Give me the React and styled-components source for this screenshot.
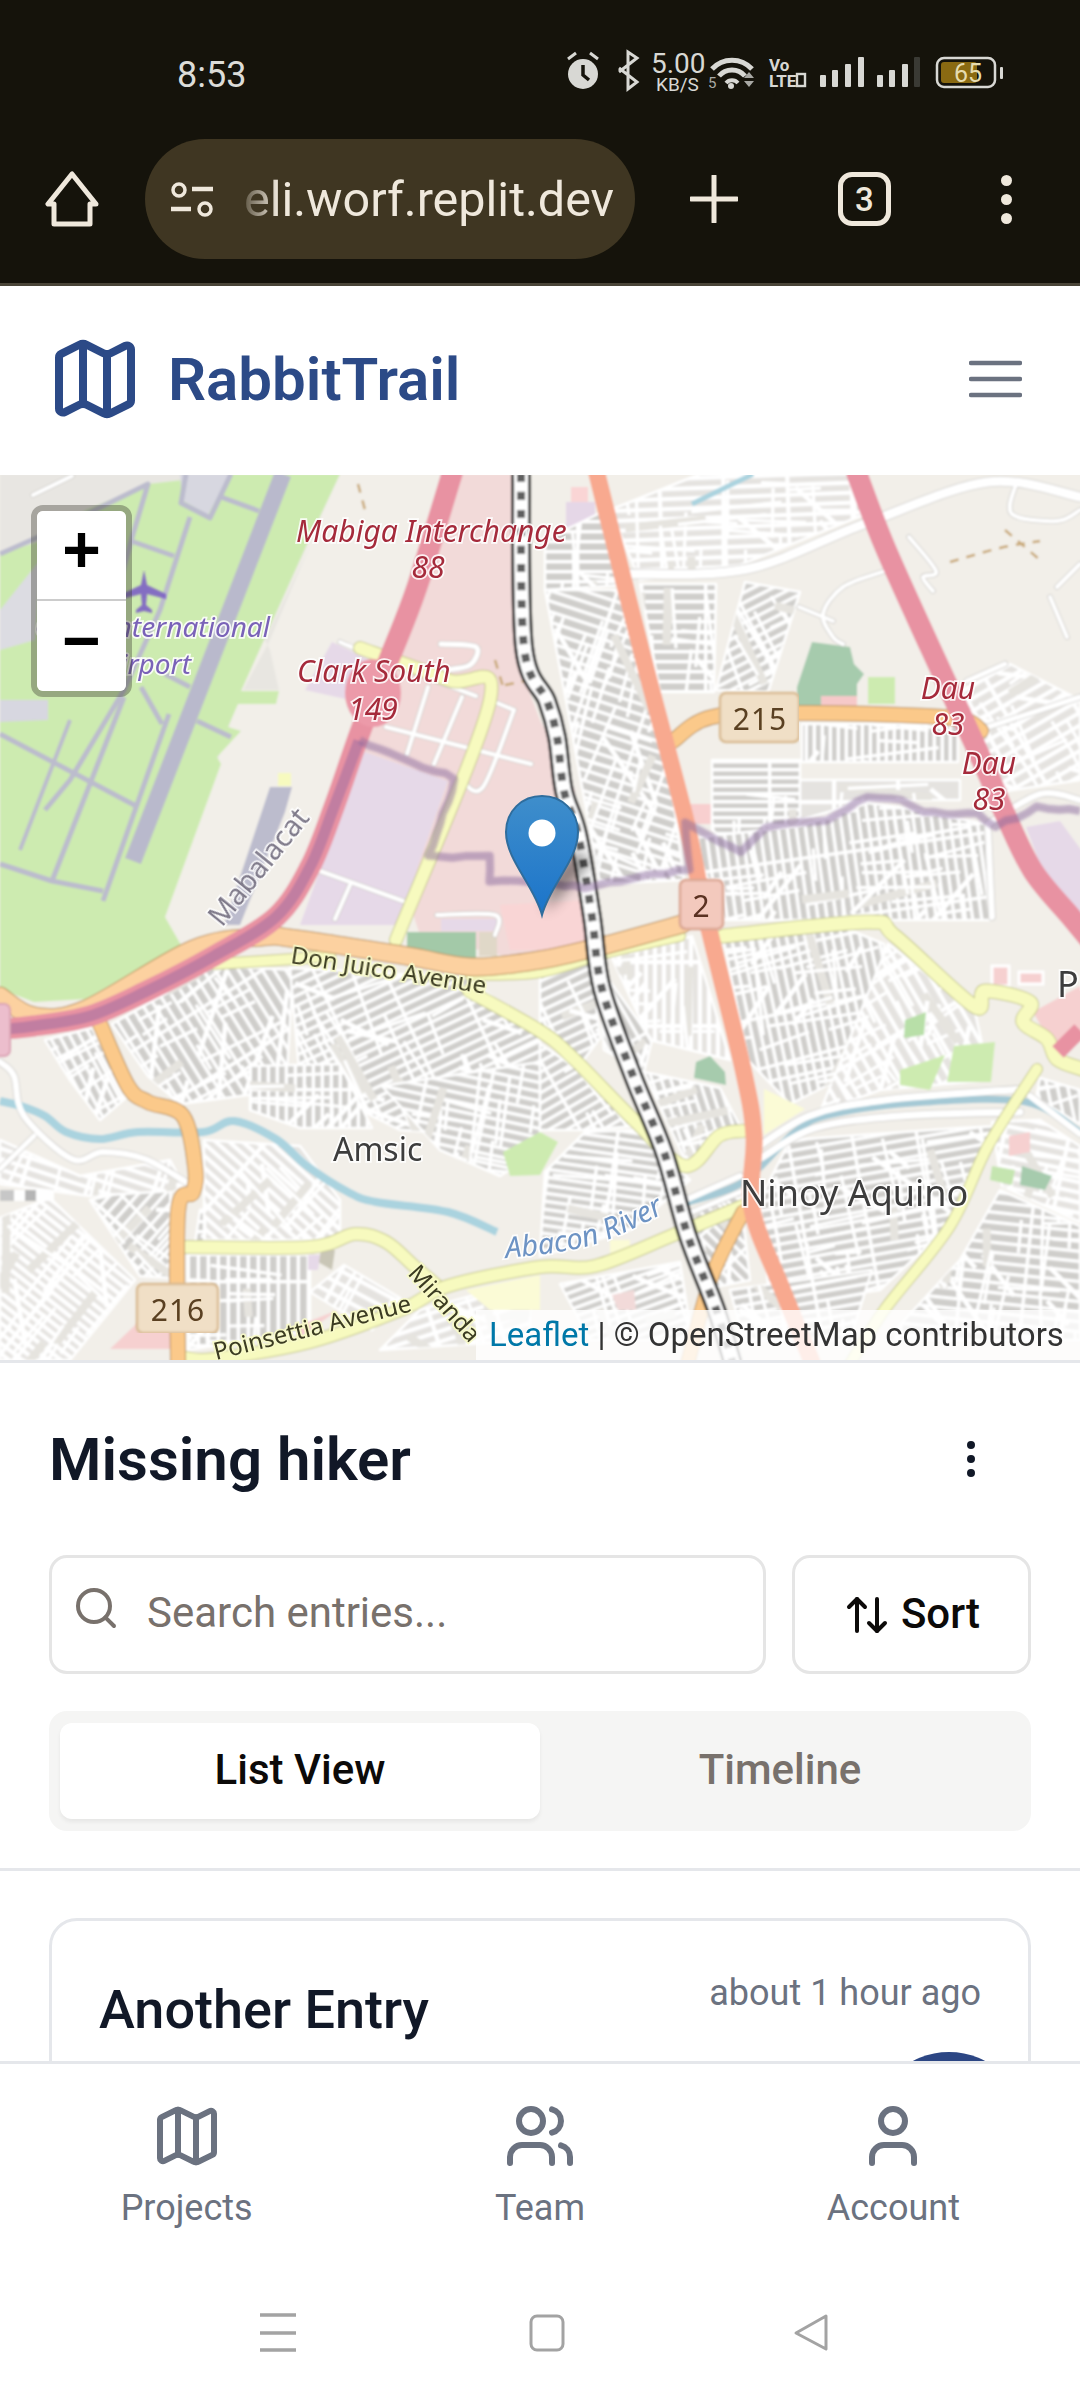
import React from "react";
import styled, { createGlobalStyle } from "styled-components";
import { Map as MapIcon, Users, User, Search, ArrowUpDown, EllipsisVertical } from "lucide-react";

const Global = createGlobalStyle`
  html, body { margin: 0; padding: 0; background: #fff; }
  * { box-sizing: border-box; }
  body { font-family: Roboto, "Noto Sans", "Liberation Sans", sans-serif; }
`;

const Screen = styled.div`
  width: 1080px; height: 2400px; display: flex; flex-direction: column; overflow: hidden; background: #fff;
`;
const Chrome = styled.div`
  background: #15130b; height: 286px; border-bottom: 3px solid #4a4538; flex: none;
`;
const StatusBar = styled.div`
  height: 126px; padding: 23px 0 0 177px; display: flex; align-items: center; color: #dcdcd8;
`;
const Time = styled.span`
  font-size: 36px; width: 383px; letter-spacing: 0; flex: none;
`;
const StatusIcons = styled.svg`
  width: 460px; height: 60px; flex: none; display: block;
`;
const StatusText = styled.text`
  font-family: Roboto, sans-serif; fill: ${p => p.$fill || "#d8d8d4"}; font-size: ${p => p.$size}px; font-weight: ${p => p.$w || 400};
`;
const UrlRow = styled.div`
  height: 146px; display: flex; align-items: center; padding-left: 45px; color: #efe8dc;
`;
const HomeIcon = styled.svg`
  width: 54px; height: 56px; flex: none; display: block;
`;
const Pill = styled.div`
  margin-left: 46px; width: 490px; height: 120px; border-radius: 60px; background: #3f3622; display: flex; align-items: center; padding-left: 25px; flex: none;
`;
const TuneIcon = styled.svg`
  width: 46px; height: 36px; flex: none; display: block;
`;
const Url = styled.span`
  margin-left: 28px; font-size: 48.5px; white-space: nowrap; letter-spacing: 0;
  -webkit-mask-image: linear-gradient(to right, rgba(0,0,0,.2) 0, #000 34px);
  mask-image: linear-gradient(to right, rgba(0,0,0,.2) 0, #000 34px);
`;
const PlusIcon = styled.svg`
  margin-left: 55px; width: 48px; height: 48px; flex: none; display: block;
`;
const TabCount = styled.div`
  margin-left: 100px; width: 53px; height: 54px; border: 5px solid #efe8dc; border-radius: 14px; display: flex; align-items: center; justify-content: center; font-size: 33px; font-weight: 500; flex: none;
`;
const MoreDots = styled.div`
  margin-left: 110px; display: flex; flex-direction: column; gap: 8px;
  span { width: 11px; height: 11px; border-radius: 50%; background: #efe8dc; display: block; }
`;
const AppHeader = styled.header`
  height: 189px; flex: none; display: flex; align-items: center; padding: 0 58px 3px 47px; background: #fff; color: #2c4a87;
`;
const Brand = styled.div`
  display: flex; align-items: center; gap: 25px; flex: 1; font-size: 60px; font-weight: 600; letter-spacing: 0;
`;
const Burger = styled.svg`
  width: 53px; height: 38px; display: block;
`;
const MapBox = styled.div`
  position: relative; height: 885px; flex: none; overflow: hidden; background: #f2efe9;
`;
const MapSvg = styled.svg`
  display: block; width: 1080px; height: 885px;
`;
const Lbl = styled.text`
  font-family: "Noto Sans", "DejaVu Sans", sans-serif;
  font-size: ${p => p.$size || 27}px;
  font-style: ${p => p.$italic ? "italic" : "normal"};
  fill: ${p => p.$fill || "#3c3c3c"};
  stroke: ${p => p.$halo || "rgba(255,255,255,.85)"};
  stroke-width: 3.5px;
  paint-order: stroke;
`;
const ZoomControl = styled.div`
  position: absolute; left: 31px; top: 30px; width: 101px; border: 6px solid rgba(60,60,50,.38); border-radius: 12px; background-clip: padding-box; display: flex; flex-direction: column;
`;
const ZoomBtn = styled.div`
  height: ${p => p.$h}px; background: #fff; color: #000; display: flex; align-items: center; justify-content: center;
  border-radius: ${p => p.$first ? "6px 6px 0 0" : "0 0 6px 6px"};
  border-bottom: ${p => p.$first ? "2px solid #ccc" : "0"};
  font: 700 66px/1 "Liberation Mono", monospace;
`;
const Attribution = styled.div`
  position: absolute; right: 0; bottom: 0; height: 50px; width: 604px; background: rgba(255,255,255,.8); color: #333; font-size: 33px; line-height: 50px; padding-left: 13px; white-space: nowrap;
  a { color: #0078a8; text-decoration: none; }
`;
const Pin = styled.svg`
  position: absolute; left: 470px; top: 318px; width: 150px; height: 128px; overflow: visible;
`;
const Content = styled.main`
  flex: 1; min-height: 0; overflow: hidden; position: relative; border-top: 3px solid #e5e7eb; background: #fff;
`;
const Toolbar = styled.section`
  padding: 0 49px; height: 505px;
`;
const TitleRow = styled.div`
  height: 192px; display: flex; align-items: center; justify-content: space-between; padding-right: 36px;
`;
const Title = styled.h1`
  margin: 0; font-size: 60px; font-weight: 600; color: #111827; letter-spacing: 0;
`;
const SearchRow = styled.div`
  display: flex; gap: 26px; height: 119px;
`;
const SearchBox = styled.div`
  width: 717px; border: 3px solid #e5e5e5; border-radius: 18px; display: flex; align-items: flex-start; padding: 26px 0 0 20px; gap: 27px; color: #78716c; font-size: 42px;
  span { line-height: 48px; margin-top: 5px; }
`;
const SortBtn = styled.button`
  flex: 1; background: #fff; border: 3px solid #e5e5e5; border-radius: 18px; display: flex; align-items: center; justify-content: center; gap: 10px; font: 500 42px Roboto, sans-serif; color: #0c0a09; padding: 0;
  span { margin-top: -2px; }
`;
const Tabs = styled.div`
  margin-top: 37px; height: 120px; background: #f5f5f4; border-radius: 18px; padding: 12px 11px; display: flex;
`;
const Tab = styled.div`
  width: 480px; border-radius: 12px; display: flex; align-items: center; justify-content: center; font-size: 42px; font-weight: 500; padding-bottom: 3px;
  color: ${p => p.$active ? "#0c0a09" : "#78716c"};
  background: ${p => p.$active ? "#fff" : "transparent"};
  box-shadow: ${p => p.$active ? "0 3px 4px rgba(0,0,0,.06)" : "none"};
`;
const Divider = styled.hr`
  margin: 0; border: 0; height: 3px; background: #e5e7eb;
`;
const List = styled.div`
  padding: 47px 49px 0;
`;
const Card = styled.article`
  border: 3px solid #e5e7eb; border-radius: 28px; padding: 51px 47px; height: 300px; display: flex; justify-content: space-between; align-items: flex-start;
`;
const CardTitle = styled.h2`
  margin: 6px 0 0; font-size: 54px; font-weight: 500; color: #111827;
`;
const CardTime = styled.span`
  font-size: 36px; color: #6b7280;
`;
const Fab = styled.div`
  position: absolute; left: 872px; top: 689px; width: 154px; height: 154px; border-radius: 50%; background: #2c4684;
`;
const BottomNav = styled.nav`
  flex: none; height: 339px; background: #fff; border-top: 3px solid #e5e7eb; position: relative; z-index: 1;
`;
const NavItems = styled.div`
  display: grid; grid-template-columns: repeat(3, 1fr); padding: 36px 10px 0;
`;
const NavItem = styled.div`
  display: flex; flex-direction: column; align-items: center; color: #6b7280; font-size: 36px; gap: 15px;
`;
const Gestures = styled.div`
  margin-top: 84px; display: flex; align-items: center; padding-left: 258px;
`;
const GestureIcon = styled.svg`
  width: 40px; height: 40px; display: block; flex: none; margin-right: ${p => p.$mr || 0}px;
`;

function smooth(p) {
  if (p.length < 3) return "M" + p.map(q => q.join(" ")).join("L");
  let d = `M${p[0][0]} ${p[0][1]}`;
  for (let i = 0; i < p.length - 1; i++) {
    const a = p[i - 1] || p[i], b = p[i], c = p[i + 1], e = p[i + 2] || c;
    const c1 = [b[0] + (c[0] - a[0]) / 6, b[1] + (c[1] - a[1]) / 6];
    const c2 = [c[0] - (e[0] - b[0]) / 6, c[1] - (e[1] - b[1]) / 6];
    d += `C${c1[0].toFixed(1)} ${c1[1].toFixed(1)} ${c2[0].toFixed(1)} ${c2[1].toFixed(1)} ${c[0]} ${c[1]}`;
  }
  return d;
}
const poly = p => p.map(q => q.join(",")).join(" ");

const Road = ({ pts, w, color, casing, dash }) => (
  <g fill="none" strokeLinecap="round" strokeLinejoin="round">
    {casing && <path d={smooth(pts)} stroke={casing} strokeWidth={w + 2} strokeDasharray={dash} />}
    <path d={smooth(pts)} stroke={color} strokeWidth={w} />
  </g>
);

const patches = [
  { a: -2, g: 10, p: [[610, 510], [700, 474], [850, 474], [870, 512], [740, 565], [640, 580]], light: true },
  { a: 0, g: 10, p: [[545, 540], [606, 510], [622, 585], [545, 590]] },
  { a: 0, g: 10, p: [[640, 584], [716, 584], [714, 692], [660, 692]] },
  { a: -27, g: 9, p: [[745, 582], [800, 592], [768, 692], [716, 690]] },
  { a: 18, g: 10, p: [[545, 590], [628, 590], [668, 760], [684, 880], [600, 884], [566, 700]] },
  { a: 0, g: 8, p: [[712, 760], [800, 760], [800, 822], [740, 850], [712, 830]] },
  { a: 90, g: 8, p: [[802, 724], [958, 724], [958, 762], [802, 762]] },
  { a: 0, g: 32, p: [[800, 780], [960, 780], [960, 800], [870, 800], [800, 820]], light: true },
  { a: 82, g: 9, p: [[692, 838], [800, 826], [868, 803], [905, 808], [985, 824], [990, 920], [724, 920]] },
  { a: -30, g: 11, p: [[962, 690], [1010, 664], [1080, 700], [1080, 780], [1000, 792]], light: true },
  { a: 62, g: 9, p: [[45, 1040], [92, 1028], [128, 1096], [100, 1120], [70, 1080]] },
  { a: 58, g: 10, p: [[112, 1024], [215, 966], [293, 970], [286, 1090], [180, 1104], [148, 1076]] },
  { a: -25, g: 9, p: [[290, 968], [468, 978], [540, 1034], [540, 1130], [470, 1134], [400, 1130], [340, 1100], [300, 1080]] },
  { a: 90, g: 9, p: [[250, 1066], [340, 1064], [372, 1128], [300, 1128], [250, 1110]] },
  { a: 12, g: 9, p: [[382, 1086], [540, 1062], [540, 1150], [500, 1176], [440, 1150]] },
  { a: 38, g: 8, p: [[0, 1218], [50, 1198], [135, 1280], [70, 1360], [0, 1360]], light: true },
  { a: -48, g: 10, p: [[90, 1200], [170, 1182], [172, 1278], [140, 1276]] },
  { a: 0, g: 10, p: [[200, 1210], [258, 1198], [262, 1244], [195, 1244]] },
  { a: 90, g: 10, p: [[188, 1255], [310, 1255], [310, 1330], [188, 1350]] },
  { a: 28, g: 12, p: [[344, 1265], [400, 1298], [372, 1330], [310, 1292]], light: true },
  { a: 42, g: 9, p: [[204, 1140], [300, 1146], [340, 1200], [340, 1240], [204, 1240]], light: true },
  { a: 18, g: 10, p: [[0, 1140], [80, 1176], [170, 1160], [186, 1190], [90, 1196], [0, 1184]], light: true },
  { a: -25, g: 9, p: [[540, 974], [590, 952], [600, 1038], [582, 1062], [540, 1034]] },
  { a: 90, g: 9, p: [[612, 958], [692, 936], [712, 1000], [730, 1060], [650, 1040]], light: true },
  { a: 60, g: 9, p: [[598, 965], [652, 1040], [644, 1072], [604, 1050]] },
  { a: 78, g: 9, p: [[724, 942], [840, 926], [884, 944], [878, 1060], [790, 1104], [748, 1060]] },
  { a: 72, g: 9, p: [[644, 1072], [720, 1088], [742, 1130], [686, 1162]] },
  { a: -30, g: 9, p: [[540, 1044], [582, 1072], [636, 1126], [585, 1130], [540, 1130]] },
  { a: 60, g: 11, p: [[888, 944], [975, 1012], [990, 1080], [880, 1090], [820, 1112]], light: true },
  { a: -10, g: 9, p: [[790, 1140], [960, 1128], [1000, 1126], [985, 1150], [960, 1216], [880, 1290], [770, 1306], [760, 1200]] },
  { a: 8, g: 8, p: [[585, 1132], [640, 1130], [690, 1180], [630, 1230], [540, 1256], [545, 1172]] },
  { a: 6, g: 10, p: [[1000, 1190], [1080, 1226], [1080, 1340], [886, 1340], [960, 1260]] },
  { a: 12, g: 10, p: [[992, 1122], [1040, 1120], [1080, 1146], [1080, 1222], [1002, 1186]], light: true },
  { a: 78, g: 10, p: [[1040, 1078], [1080, 1090], [1080, 1124], [1036, 1098]] },
  { a: -10, g: 9, p: [[730, 1290], [872, 1270], [850, 1340], [744, 1340]] },
  { a: -20, g: 8, p: [[560, 1284], [680, 1262], [692, 1340], [590, 1340]] },
  { a: -18, g: 10, p: [[420, 1310], [530, 1280], [530, 1340], [380, 1350]], light: true },
  { a: 45, g: 9, p: [[692, 1212], [740, 1190], [750, 1280], [700, 1290]] },
];

let seed = 4711;
const rnd = () => (seed = (seed * 16807) % 2147483647) / 2147483647;
const patchNoise = patches.map((s) => {
  const xs = s.p.map(q => q[0]), ys = s.p.map(q => q[1]);
  const x0 = Math.min(...xs), x1 = Math.max(...xs), y0 = Math.min(...ys), y1 = Math.max(...ys);
  const n = Math.round(((x1 - x0) * (y1 - y0)) / 620);
  const out = [];
  for (let i = 0; i < n; i++) {
    const x = x0 + rnd() * (x1 - x0), y = y0 + rnd() * (y1 - y0);
    const kind = rnd();
    const len = 26 + rnd() * 70;
    const ang = ((s.a + (kind < 0.62 ? 90 : kind < 0.85 ? 0 : 45) + (rnd() - 0.5) * 16) * Math.PI) / 180;
    out.push({
      d: `M${x.toFixed(1)} ${y.toFixed(1)}L${(x + Math.cos(ang) * len).toFixed(1)} ${(y + Math.sin(ang) * len).toFixed(1)}`,
      w: kind < 0.85 ? 3.2 : 4.5,
      beige: rnd() < 0.1,
    });
  }
  return out;
});

const wobble = pts => {
  const out = [];
  for (let i = 0; i < pts.length - 1; i++) {
    const [x0, y0] = pts[i], [x1, y1] = pts[i + 1];
    const steps = Math.max(1, Math.round(Math.hypot(x1 - x0, y1 - y0) / 12));
    for (let k = 0; k < steps; k++) {
      const t = k / steps;
      out.push([+(x0 + (x1 - x0) * t + (rnd() - .5) * 3).toFixed(1), +(y0 + (y1 - y0) * t + (rnd() - .5) * 3).toFixed(1)]);
    }
  }
  out.push(pts[pts.length - 1]);
  return out;
};

const whites = [
  { w: 9, p: [[626, 574], [747, 569], [864, 524], [988, 482], [1080, 497]] },
  { w: 4, p: [[885, 571], [843, 587], [823, 614], [833, 637], [843, 644]] },
  { w: 4, p: [[799, 607], [833, 621]] },
  { w: 4, p: [[909, 537], [936, 571], [923, 577], [933, 591]] },
  { w: 4, p: [[1016, 484], [1012, 514], [1057, 521], [1080, 510]] },
  { w: 4, p: [[1057, 587], [1080, 564]] },
  { w: 4, p: [[1050, 597], [1067, 637]] },
  { w: 5, p: [[1005, 664], [967, 681]] },
  { w: 5, p: [[1080, 697], [988, 727]] },
  { w: 6, p: [[988, 824], [1040, 794], [1080, 800]] },
  { w: 6, p: [[988, 827], [992, 917]] },
  { w: 6, p: [[0, 1062], [14, 1076], [24, 1116], [72, 1159], [103, 1152], [145, 1159], [186, 1182]] },
  { w: 5, p: [[0, 1169], [34, 1136]] },
  { w: 7, p: [[751, 1152], [809, 1116], [885, 1100], [1023, 1089]] },
  { w: 7, p: [[761, 1158], [815, 1128], [900, 1116], [1020, 1112]] },
  { w: 6, p: [[1030, 1096], [1080, 1134]] },
  { w: 6, p: [[688, 1199], [740, 1176]] },
  { w: 5, p: [[692, 1212], [745, 1190]] },
  { w: 4, p: [[340, 642], [392, 664], [476, 696]] },
  { w: 4, p: [[428, 687], [407, 754]] },
  { w: 4, p: [[386, 727], [531, 764]] },
  { w: 4, p: [[462, 697], [434, 764]] },
  { w: 4, p: [[514, 710], [483, 787], [462, 781]] },
  { w: 4, p: [[514, 710], [490, 700]] },
  { w: 5, p: [[441, 644], [476, 647], [470, 665], [445, 670]] },
  { w: 4, p: [[320, 871], [403, 901]] },
  { w: 4, p: [[350, 885], [335, 919]] },
  { w: 4, p: [[437, 915], [495, 915], [495, 935]] },
  { w: 4, p: [[33, 495], [72, 476]] },
];

const taxi = [
  { w: 5, p: [[0, 554], [52, 531], [148, 484], [131, 541], [110, 620]] },
  { w: 5, p: [[190, 517], [160, 610], [124, 690], [70, 780], [45, 810]] },
  { w: 5, p: [[169, 714], [103, 901]] },
  { w: 5, p: [[124, 697], [52, 881]] },
  { w: 5, p: [[0, 734], [138, 807]] },
  { w: 5, p: [[0, 864], [52, 881], [103, 891]] },
  { w: 5, p: [[141, 687], [162, 724]] },
  { w: 5, p: [[131, 541], [174, 556]] },
  { w: 5, p: [[221, 497], [259, 511]] },
  { w: 5, p: [[197, 721], [231, 737]] },
  { w: 5, p: [[165, 674], [190, 687]] },
  { w: 5, p: [[186, 474], [181, 503], [210, 518], [231, 474]] },
  { w: 4, p: [[70, 720], [20, 850]] },
];

const tan = [
  [[358, 484], [365, 510]],
  [[950, 562], [1000, 548], [1040, 541]],
  [[1005, 530], [1040, 560]],
  [[495, 660], [504, 690]],
  [[505, 685], [530, 680]],
];

const motorwayA = [[452, 474], [417, 587], [390, 657], [362, 727], [334, 807], [310, 867], [276, 917], [214, 956], [145, 992], [90, 1016], [34, 1026], [0, 1029]];
const motorwayB = [[857, 474], [885, 547], [930, 647], [964, 721], [988, 774], [1005, 814], [1033, 871], [1071, 917], [1090, 940]];
const salmon = [[597, 474], [643, 657], [685, 817], [699, 884], [709, 929], [743, 1069], [754, 1136], [752, 1209], [781, 1286], [812, 1362]];
const rail = [[521, 474], [524, 647], [547, 701], [557, 737], [564, 791], [578, 834], [592, 917], [602, 989], [633, 1076], [664, 1152], [688, 1236], [716, 1309], [733, 1364]];
const trail = wobble([[359, 741], [455, 779], [428, 857], [490, 857], [490, 881], [531, 883], [585, 887], [688, 869], [685, 821], [740, 852], [767, 827], [826, 821], [868, 796], [902, 799], [923, 812], [978, 814], [995, 827], [1037, 807], [1080, 811]]);

function MapDrawing() {
  return (
    <MapSvg viewBox="0 475 1080 885" xmlns="http://www.w3.org/2000/svg">
      <defs>
        <filter id="tile" x="0" y="0" width="100%" height="100%">
          <feGaussianBlur stdDeviation="1" />
        </filter>
        <filter id="soft" x="-5%" y="-5%" width="110%" height="110%">
          <feGaussianBlur stdDeviation="0.5" />
        </filter>
        <filter id="trailBlur" x="-5%" y="-5%" width="110%" height="110%">
          <feGaussianBlur stdDeviation="1.4" />
        </filter>
        <path id="abaconCurve" d="M506 1258C550 1254 585 1250 612 1238C640 1226 660 1216 690 1198" fill="none" />
        {patches.map((s, i) => (
          <pattern key={i} id={"res" + i} patternUnits="userSpaceOnUse" width="64" height={s.g} patternTransform={`rotate(${s.a})`}>
            <rect width="64" height={s.g} fill={s.light ? "#e5e3e0" : "#cfcecb"} />
            <rect width="64" height={s.light ? 4.2 : 3.4} fill="#fff" />
            <rect width={s.light ? 4.2 : 3.4} height={s.g} fill="#fff" />
          </pattern>
        ))}
        {patches.map((s, i) => (
          <clipPath key={i} id={"clip" + i}><polygon points={poly(s.p)} /></clipPath>
        ))}
      </defs>
      <g filter="url(#tile)">
        <rect x="0" y="475" width="1080" height="885" fill="#f2efe9" />
        <polygon fill="#e8e6e2" points={poly([[0, 474], [340, 474], [241, 691], [165, 917], [0, 989]])} />
        <polygon fill="#cdebb0" points={poly([[340, 474], [307, 544], [241, 691], [279, 691], [276, 704], [238, 704], [228, 727], [241, 731], [217, 757], [221, 764], [165, 917], [181, 945], [86, 999], [34, 1002], [0, 989], [0, 554], [50, 538], [86, 510], [148, 484], [235, 474]])} />
        <polygon fill="#e8e6e1" points={poly([[310, 545], [270, 640], [243, 690], [279, 690], [270, 650], [265, 640]])} />
        <polygon fill="#dcdce2" points={poly([[0, 610], [40, 560], [35, 640], [0, 650]])} />
        <polygon fill="#d7d7e0" points={poly([[0, 700], [48, 700], [48, 720], [0, 722]])} />
        <polygon fill="#d7d7e0" points={poly([[180, 474], [230, 474], [208, 515], [182, 500]])} />

        <polygon fill="#f2dad9" points={poly([[462, 474], [515, 474], [515, 655], [540, 720], [575, 790], [585, 940], [520, 960], [420, 935], [352, 735]])} />
        <polygon fill="#e6d9e8" points={poly([[362, 751], [448, 781], [420, 860], [400, 925], [300, 925], [320, 870]])} />
        <polygon fill="#e6d9e8" points={poly([[332, 642], [370, 660], [350, 700], [305, 690]])} />
        <polygon fill="#e6d9e8" points={poly([[441, 919], [500, 919], [500, 931], [441, 931]])} />
        <polygon fill="#f9d5d5" points={poly([[500, 905], [590, 900], [590, 950], [510, 950]])} />
        <polygon fill="#a3c9a8" points={poly([[407, 932], [476, 932], [476, 960], [407, 955]])} />
        <polygon fill="#e0d8c8" points={poly([[479, 932], [497, 932], [497, 956], [479, 956]])} />
        <polygon fill="#e6d9e8" points={poly([[1026, 827], [1060, 821], [1082, 851], [1082, 917], [1060, 917]])} />

        <polygon fill="#a6cbad" points={poly([[812, 642], [850, 647], [854, 664], [864, 674], [857, 684], [857, 707], [797, 707], [797, 687]])} />
        <rect x="868" y="677" width="27" height="27" fill="#cdebb0" />
        <rect x="821" y="696" width="36" height="14" fill="#f6c9c9" />
        <rect x="571" y="487" width="17" height="17" fill="#fad5d5" />
        <rect x="566" y="502" width="29" height="29" fill="#e5d7e7" />
        <rect x="688" y="804" width="23" height="20" fill="#f8cfcf" />

        {patches.map((s, i) => (
          <g key={i}>
            <polygon points={poly(s.p)} fill={`url(#res${i})`} stroke="#fff" strokeWidth="2.5" strokeLinejoin="round" />
            <g clipPath={`url(#clip${i})`}>
              {patchNoise[i].map((n, k) => (
                <path key={k} d={n.d} stroke={n.beige ? "#e6e4df" : "#fff"} strokeWidth={n.beige ? 8 : n.w} fill="none" />
              ))}
            </g>
          </g>
        ))}

        <polygon fill="#cdebb0" points={poly([[954, 1046], [995, 1042], [991, 1082], [947, 1082]])} />
        <polygon fill="#b8dfa8" points={poly([[905, 1020], [926, 1012], [924, 1035], [904, 1038]])} />
        <polygon fill="#cdebb0" points={poly([[900, 1070], [945, 1055], [930, 1090], [900, 1085]])} />
        <polygon fill="#a6cbad" points={poly([[696, 1062], [710, 1056], [725, 1072], [726, 1085], [694, 1078]])} />
        <polygon fill="#fbfbd6" points={poly([[764, 1089], [805, 1109], [764, 1135]])} />
        <polygon fill="#cdebb0" points={poly([[503, 1152], [540, 1132], [558, 1142], [540, 1175], [510, 1176]])} />
        <polygon fill="#c5e5b0" points={poly([[992, 1166], [1015, 1170], [1012, 1185], [990, 1180]])} />
        <polygon fill="#a6cbad" points={poly([[1022, 1166], [1052, 1176], [1045, 1190], [1020, 1185]])} />
        <polygon fill="#f6d0d0" points={poly([[1009, 1136], [1030, 1132], [1030, 1152], [1009, 1156]])} />
        <polygon fill="#f6d0d0" points={poly([[110, 1349], [172, 1349], [172, 1290]])} />
        <polygon fill="#f6d0d0" points={poly([[300, 1325], [338, 1310], [296, 1340]])} />
        <polygon fill="#f6d0d0" points={poly([[1033, 1012], [1082, 985], [1082, 1040], [1055, 1050]])} />
        <rect x="992" y="966" width="17" height="20" fill="#f6d0d0" stroke="#fff" strokeWidth="3" />
        <rect x="1019" y="972" width="24" height="12" fill="#f6d0d0" stroke="#fff" strokeWidth="3" />
        <rect x="610" y="1240" width="20" height="20" fill="#fbfbd6" />
        <polygon fill="#f2dad9" points={poly([[612, 1295], [634, 1290], [636, 1310], [618, 1310]])} />
        <polygon fill="#c9c6b6" points={poly([[322, 1248], [335, 1250], [332, 1270], [318, 1262]])} />
        <polygon fill="#e6d9e8" points={poly([[308, 1255], [320, 1255], [318, 1270], [308, 1270]])} />
        <polygon fill="#fbfbd6" points={poly([[466, 1290], [540, 1275], [540, 1310], [490, 1310]])} />

        {whites.map((s, i) => (
          <path key={"c" + i} d={smooth(s.p)} fill="none" stroke="#cfcdca" strokeWidth={s.w + 1.6} strokeLinecap="round" />
        ))}
        <path d={smooth([[0, 1101], [21, 1106], [45, 1116], [66, 1132], [100, 1139], [138, 1132], [203, 1132], [234, 1121], [276, 1139], [307, 1166], [348, 1192], [376, 1202], [448, 1212], [497, 1232]])} fill="none" stroke="#aad3df" strokeWidth="8" />
        <path d={smooth([[1080, 1132], [1026, 1102], [926, 1102], [833, 1114], [795, 1132], [743, 1182], [688, 1202]])} fill="none" stroke="#a5c9d5" strokeWidth="7" />
        <path d={smooth([[692, 504], [753, 474]])} fill="none" stroke="#aad3df" strokeWidth="5" />
        {whites.map((s, i) => (
          <path key={"w" + i} d={smooth(s.p)} fill="none" stroke="#fff" strokeWidth={s.w} strokeLinecap="round" />
        ))}
        <polygon fill="#bcbccd" points={poly([[270, 787], [292, 787], [285, 812], [240, 925], [224, 925]])} />
        <rect x="278" y="773" width="13" height="13" fill="#f7fabf" />
        {taxi.map((s, i) => (
          <path key={"t" + i} d={"M" + s.p.map(q => q.join(" ")).join("L")} fill="none" stroke="#bcbccd" strokeWidth={s.w} strokeLinejoin="round" />
        ))}
        <path d="M283 474L133 861" stroke="#b9b9cc" strokeWidth="17" fill="none" />
        <g>
          <rect x="0" y="1190" width="14" height="11" fill="#c7c7c7" />
          <rect x="14" y="1190" width="11" height="11" fill="#fff" />
          <rect x="25" y="1190" width="11" height="11" fill="#b5b5b5" />
          <rect x="36" y="1190" width="18" height="11" fill="#fff" />
        </g>
        {tan.map((p, i) => (
          <path key={i} d={smooth(p)} fill="none" stroke="#c9a977" strokeWidth="2.5" strokeDasharray="9 8" />
        ))}

        <Road color="#f7fabf" casing="#c6c88d" w={12} pts={[[396, 940], [490, 700], [448, 680], [360, 648]]} />
        <Road color="#f7fabf" casing="#c6c88d" w={10} pts={[[214, 964], [293, 959], [330, 956]]} />
        <Road color="#f7fabf" casing="#c6c88d" w={10} pts={[[470, 975], [540, 972], [609, 952], [680, 936]]} />
        <Road color="#f7fabf" casing="#c6c88d" w={13} pts={[[723, 936], [867, 922], [895, 936], [974, 1006], [985, 991], [1030, 1002], [1023, 1022], [1047, 1039], [1057, 1059], [1082, 1069]]} />
        <Road color="#f7fabf" casing="#c6c88d" w={10} pts={[[1037, 1069], [988, 1146], [950, 1226], [885, 1309], [850, 1364]]} />
        <Road color="#f7fabf" casing="#c6c88d" w={12} pts={[[469, 991], [540, 1031], [574, 1059], [636, 1122], [685, 1166], [719, 1136], [743, 1131]]} />
        <Road color="#f7fabf" casing="#c6c88d" w={12} pts={[[186, 1247], [310, 1247], [355, 1234], [386, 1242], [414, 1266], [441, 1289]]} />
        <Road color="#f7fabf" casing="#c6c88d" w={12} pts={[[186, 1358], [214, 1359], [310, 1342], [403, 1309], [448, 1286], [540, 1267], [595, 1266], [671, 1236], [743, 1206]]} />

        <Road color="#fcd1a0" casing="#b9925c" w={17} pts={[[0, 996], [34, 1016], [86, 1009], [193, 949], [262, 937], [297, 939], [407, 956], [472, 967], [540, 960], [602, 946], [682, 924]]} />
        <Road color="#fbc98a" casing="#b9925c" w={14} pts={[[100, 1024], [128, 1086], [148, 1102], [183, 1116], [195, 1166], [193, 1192], [178, 1212], [178, 1362]]} />
        <Road color="#fbc98a" casing="#b9925c" w={13} pts={[[743, 1212], [712, 1276], [688, 1362]]} />
        <Road color="#fbc98a" casing="#b9925c" w={14} pts={[[673, 741], [712, 717], [800, 713], [926, 716], [967, 721], [981, 731]]} />

        <Road color="#f8a98f" w={17} pts={salmon} />
        <Road color="#e892a2" w={21} pts={motorwayA} />
        <Road color="#e892a2" w={21} pts={motorwayB} />
        <path d="M1080 1030L1058 1052" stroke="#e892a2" strokeWidth="16" />
        <ellipse cx="373" cy="693" rx="28" ry="34" fill="#ec9aa9" />
        <path d={smooth([[359, 741], [334, 807], [310, 867], [276, 917], [214, 956], [145, 992], [90, 1016], [34, 1026], [8, 1029]])} fill="none" stroke="#9a6a9f" strokeWidth="11" opacity=".5" />

        <path d={smooth(rail)} fill="none" stroke="#1f1f1f" strokeWidth="20" />
        <path d={smooth(rail)} fill="none" stroke="#fff" strokeWidth="14" />
        <path d={smooth(rail)} fill="none" stroke="#5e5e5e" strokeWidth="8" strokeDasharray="8 10" />
      </g>
      <path d={"M" + trail.map(q => q.join(" ")).join("L")} fill="none" stroke="#8a6a9e" strokeWidth="8" strokeLinejoin="round" opacity=".5" filter="url(#trailBlur)" />
      <g filter="url(#tile)">
        <rect x="720" y="693" width="79" height="49" rx="6" fill="#f0dfc6" stroke="#d9bc94" strokeWidth="2.5" />
        <rect x="680" y="880" width="43" height="49" rx="6" fill="#f3c9bd" stroke="#dba794" strokeWidth="2.5" />
        <rect x="137" y="1284" width="81" height="49" rx="6" fill="#f0dfc6" stroke="#d9bc94" strokeWidth="2.5" />
        <rect x="-30" y="1004" width="40" height="52" rx="6" fill="#ecbecd" stroke="#dca4b5" strokeWidth="2" />
        <path d="M144 570l3 15 19 9v5l-19-5-1 11 6 5v3l-8-2-8 2v-3l6-5-1-11-19 5v-5l19-9z" fill="#7b5fc4" opacity=".9" />
      </g>
      <g filter="url(#soft)">
        <Lbl x="296" y="542" $italic $size={30} $fill="#a52a3a">Mabiga Interchange</Lbl>
        <Lbl x="428" y="578" $italic $size={30} $fill="#a52a3a" textAnchor="middle">88</Lbl>
        <Lbl x="297" y="682" $italic $size={30} $fill="#a52a3a">Clark South</Lbl>
        <Lbl x="373" y="720" $italic $size={30} $fill="#a52a3a" textAnchor="middle">149</Lbl>
        <Lbl x="948" y="699" $italic $size={30} $fill="#a52a3a" textAnchor="middle">Dau</Lbl>
        <Lbl x="948" y="735" $italic $size={30} $fill="#a52a3a" textAnchor="middle">83</Lbl>
        <Lbl x="989" y="774" $italic $size={30} $fill="#a52a3a" textAnchor="middle">Dau</Lbl>
        <Lbl x="989" y="810" $italic $size={30} $fill="#a52a3a" textAnchor="middle">83</Lbl>
        <Lbl x="270" y="637" $italic $size={28} $fill="#7a62b8" textAnchor="end">Clark International</Lbl>
        <Lbl x="191" y="674" $italic $size={28} $fill="#7a62b8" textAnchor="end">Airport</Lbl>
        <Lbl $size={29} $fill="#7f7a8a" transform="translate(222 928) rotate(-51)">Mabalacat</Lbl>
        <Lbl $size={24} $fill="#3a3a20" $halo="rgba(247,250,200,.9)" transform="translate(290 963) rotate(9)">Don Juico Avenue</Lbl>
        <Lbl x="333" y="1161" $size={32}>Amsic</Lbl>
        <Lbl $italic $size={29} $fill="#6d93c4"><textPath href="#abaconCurve">Abacon River</textPath></Lbl>
        <Lbl $size={24} $fill="#3a3a20" $halo="rgba(247,250,200,.9)" transform="translate(407 1274) rotate(48)">Miranda</Lbl>
        <Lbl $size={24} $fill="#3a3a20" $halo="rgba(247,250,200,.9)" transform="translate(216 1360) rotate(-14)">Poinsettia Avenue</Lbl>
        <Lbl x="740" y="1206" $size={36}>Ninoy Aquino</Lbl>
        <Lbl x="1057" y="997" $size={36}>Pu</Lbl>
        <Lbl x="760" y="730" $size={30} $fill="#5a4020" $halo="none" textAnchor="middle" letterSpacing="1">215</Lbl>
        <Lbl x="701" y="917" $size={30} $fill="#5a3020" $halo="none" textAnchor="middle">2</Lbl>
        <Lbl x="178" y="1321" $size={30} $fill="#5a4020" $halo="none" textAnchor="middle" letterSpacing="1">216</Lbl>
      </g>
    </MapSvg>
  );
}

const App = () => (
  <Screen>
    <Global />
    <Chrome>
      <StatusBar>
        <Time>8:53</Time>
        <StatusIcons viewBox="560 45 460 60">
          <g fill="#d8d8d4">
            <circle cx="583" cy="74" r="15" />
            <path d="M583 65v10l6 5" stroke="#15130b" strokeWidth="3.5" fill="none" />
            <path d="M568 59l8-6M598 59l-8-6" stroke="#d8d8d4" strokeWidth="3" fill="none" />
            <path d="M619 72l18-14-9-6v37l9-7-18-14" stroke="#d8d8d4" strokeWidth="3" fill="none" />
            <StatusText x="651" y="73" $size={28}>5.00</StatusText>
            <StatusText x="656" y="91" $size={19}>KB/S</StatusText>
            <path d="M712 69a27 27 0 0 1 40 0" stroke="#d8d8d4" strokeWidth="5" fill="none" />
            <path d="M719 76a17 17 0 0 1 26 0" stroke="#d8d8d4" strokeWidth="5" fill="none" />
            <path d="M726 83a8 8 0 0 1 12 0" stroke="#d8d8d4" strokeWidth="4" fill="none" />
            <circle cx="731" cy="86" r="3" />
            <StatusText x="708" y="88" $size={15} $fill="#a8a8a4">5</StatusText>
            <path d="M744 78l5-6 5 6zM744 81h10l-5 6z" fill="#a8a8a4" />
            <StatusText x="769" y="71" $size={17} $w={700}>Vo</StatusText>
            <StatusText x="769" y="87" $size={17} $w={700}>LTE</StatusText>
            <rect x="797" y="74" width="8" height="12" fill="none" stroke="#d8d8d4" strokeWidth="2.4" />
            <rect x="820" y="75" width="6" height="12" rx="1" />
            <rect x="832" y="70" width="6" height="17" rx="1" />
            <rect x="845" y="64" width="6" height="23" rx="1" />
            <rect x="858" y="57" width="6" height="30" rx="1" />
            <rect x="877" y="75" width="6" height="12" rx="1" />
            <rect x="889" y="70" width="6" height="17" rx="1" />
            <rect x="902" y="64" width="6" height="23" rx="1" />
            <rect x="914" y="57" width="6" height="30" rx="1" fill="#3a3a34" />
            <rect x="937" y="58" width="58" height="29" rx="7" fill="none" stroke="#d8d8d4" strokeWidth="2.5" />
            <rect x="941" y="62" width="36" height="21" rx="3" fill="#8a6a12" />
            <rect x="1000" y="67" width="3" height="12" rx="1" />
            <StatusText x="954" y="82" $size={25} $fill="#e6dcb0">65</StatusText>
          </g>
        </StatusIcons>
      </StatusBar>
      <UrlRow>
        <HomeIcon viewBox="0 0 54 56">
          <path d="M27 3L3 33h6v20h36V33h6z" fill="none" stroke="#efe8dc" strokeWidth="5" strokeLinejoin="round" />
        </HomeIcon>
        <Pill>
          <TuneIcon viewBox="0 0 46 36">
            <circle cx="9" cy="9" r="6" fill="none" stroke="#efe8dc" strokeWidth="3.5" />
            <path d="M22 8h21M1 28h20" stroke="#efe8dc" strokeWidth="4.5" />
            <circle cx="35" cy="28" r="6" fill="none" stroke="#efe8dc" strokeWidth="3.5" />
          </TuneIcon>
          <Url>eli.worf.replit.dev</Url>
        </Pill>
        <PlusIcon viewBox="0 0 48 48">
          <path d="M24 1v46M1 24h46" stroke="#efe8dc" strokeWidth="5" strokeLinecap="round" />
        </PlusIcon>
        <TabCount>3</TabCount>
        <MoreDots><span /><span /><span /></MoreDots>
      </UrlRow>
    </Chrome>
    <AppHeader>
      <Brand>
        <MapIcon size={96} strokeWidth={2} />
        RabbitTrail
      </Brand>
      <Burger viewBox="0 0 53 38">
        <path d="M2 3h49M2 19h49M2 35h49" stroke="#6b7280" strokeWidth="4.6" strokeLinecap="round" />
      </Burger>
    </AppHeader>
    <MapBox>
      <MapDrawing />
      <ZoomControl>
        <ZoomBtn $first $h={90}>+</ZoomBtn>
        <ZoomBtn $h={90}>−</ZoomBtn>
      </ZoomControl>
      <Pin viewBox="470 793 150 128">
        <defs>
          <linearGradient id="pinFill" x1="0" y1="0" x2="0" y2="1">
            <stop offset="0" stopColor="#3f8ecb" />
            <stop offset="1" stopColor="#1b74ca" />
          </linearGradient>
          <filter id="pinShadow" x="-60%" y="-60%" width="220%" height="220%">
            <feGaussianBlur stdDeviation="7" />
          </filter>
        </defs>
        <path d="M545 912L592 862L575 850L552 876z" fill="#000" opacity=".45" filter="url(#pinShadow)" />
        <path d="M542 915C534 885 506 860 506 832C506 811 522 796 542 796C562 796 578 811 578 832C578 860 550 885 542 915z" fill="url(#pinFill)" stroke="#2f6d9d" strokeWidth="2" />
        <circle cx="542" cy="833" r="13.5" fill="#fff" />
      </Pin>
      <Attribution><a>Leaflet</a> | © OpenStreetMap contributors</Attribution>
    </MapBox>
    <Content>
      <Toolbar>
        <TitleRow>
          <Title>Missing hiker</Title>
          <EllipsisVertical size={48} color="#111827" strokeWidth={2} />
        </TitleRow>
        <SearchRow>
          <SearchBox>
            <Search size={48} strokeWidth={2} />
            <span>Search entries...</span>
          </SearchBox>
          <SortBtn><ArrowUpDown size={48} strokeWidth={2} /><span>Sort</span></SortBtn>
        </SearchRow>
        <Tabs>
          <Tab $active>List View</Tab>
          <Tab>Timeline</Tab>
        </Tabs>
      </Toolbar>
      <Divider />
      <List>
        <Card>
          <CardTitle>Another Entry</CardTitle>
          <CardTime>about 1 hour ago</CardTime>
        </Card>
      </List>
      <Fab />
    </Content>
    <BottomNav>
      <NavItems>
        <NavItem><MapIcon size={72} strokeWidth={2} />Projects</NavItem>
        <NavItem><Users size={72} strokeWidth={2} />Team</NavItem>
        <NavItem><User size={72} strokeWidth={2} />Account</NavItem>
      </NavItems>
      <Gestures>
        <GestureIcon viewBox="0 0 40 40" $mr={229}>
          <path d="M2 2h36M2 20h36M2 37h36" stroke="#a3a3a3" strokeWidth="3.6" />
        </GestureIcon>
        <GestureIcon viewBox="0 0 40 40" $mr={226}>
          <rect x="4" y="3" width="32" height="34" rx="6" fill="none" stroke="#a3a3a3" strokeWidth="3" />
        </GestureIcon>
        <GestureIcon viewBox="0 0 40 40">
          <path d="M33 3L3 20l30 16z" fill="none" stroke="#a3a3a3" strokeWidth="3" strokeLinejoin="round" />
        </GestureIcon>
      </Gestures>
    </BottomNav>
  </Screen>
);

export default App;
